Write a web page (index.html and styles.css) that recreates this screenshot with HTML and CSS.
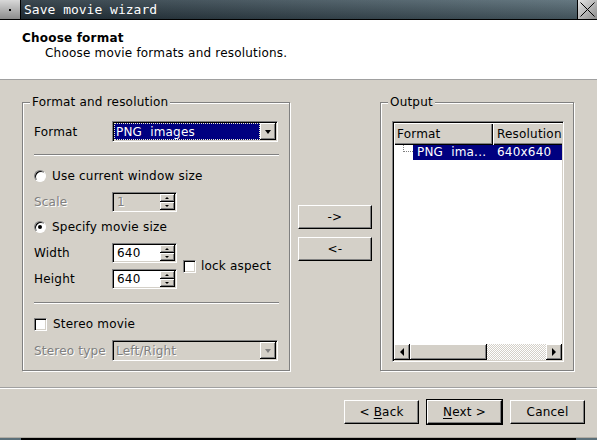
FILE: index.html
```html
<!DOCTYPE html>
<html>
<head>
<meta charset="utf-8">
<title>Save movie wizard</title>
<link rel="stylesheet" href="styles.css">
</head>
<body>
<div class="window">
  <div class="titlebar">
    <div class="tb-icon"><span class="tb-dot"></span></div>
    <div class="tb-title">Save movie wizard</div>
    <div class="tb-close">
      <svg width="19" height="19" viewBox="0 0 19 19"><path d="M2.5 2.5 L16.5 16.5 M16.5 2.5 L2.5 16.5" stroke="#000" stroke-width="1" fill="none"/></svg>
    </div>
  </div>

  <div class="header">
    <div class="h-title">Choose format</div>
    <div class="h-sub">Choose movie formats and resolutions.</div>
  </div>

  <div class="body">
    <div class="main">
      <div class="group group-left">
        <span class="legend">Format and resolution</span>

        <div class="row row-combo">
          <span class="lbl">Format</span>
          <div class="combo">
            <div class="combo-field sel"><span class="pre">PNG  images</span></div>
            <div class="combo-btn"><i class="tri-down"></i></div>
          </div>
        </div>

        <div class="sep sep-1"></div>

        <div class="row row-radio1">
          <span class="radio"></span><span class="opt-text">Use current window size</span>
        </div>

        <div class="row row-scale">
          <span class="lbl disabled">Scale</span>
          <div class="spin spin-disabled">
            <span class="spin-val disabled">1</span>
            <div class="spin-btns">
              <div class="sbtn"><i class="tri-up-s"></i></div>
              <div class="sbtn"><i class="tri-down-s"></i></div>
            </div>
          </div>
        </div>

        <div class="row row-radio2">
          <span class="radio checked"></span><span class="opt-text">Specify movie size</span>
        </div>

        <div class="size-block">
          <div class="size-col">
            <div class="row">
              <span class="lbl">Width</span>
              <div class="spin">
                <span class="spin-val">640</span>
                <div class="spin-btns">
                  <div class="sbtn"><i class="tri-up-s"></i></div>
                  <div class="sbtn"><i class="tri-down-s"></i></div>
                </div>
              </div>
            </div>
            <div class="row">
              <span class="lbl">Height</span>
              <div class="spin">
                <span class="spin-val">640</span>
                <div class="spin-btns">
                  <div class="sbtn"><i class="tri-up-s"></i></div>
                  <div class="sbtn"><i class="tri-down-s"></i></div>
                </div>
              </div>
            </div>
          </div>
          <span class="check"></span><span class="check-text">lock aspect</span>
        </div>

        <div class="sep sep-2"></div>

        <div class="row row-stereo">
          <span class="check"></span><span class="opt-text">Stereo movie</span>
        </div>

        <div class="row row-combo row-stype">
          <span class="lbl disabled">Stereo type</span>
          <div class="combo combo-disabled">
            <div class="combo-field"><span class="disabled">Left/Right</span></div>
            <div class="combo-btn"><i class="tri-down tri-disabled"></i></div>
          </div>
        </div>
      </div>

      <div class="mid">
        <button class="btn btn-mid">-&gt;</button>
        <button class="btn btn-mid">&lt;-</button>
      </div>

      <div class="group group-right">
        <span class="legend">Output</span>
        <div class="tree">
          <div class="tv-head">
            <div class="th th-1">Format</div>
            <div class="th th-2">Resolution</div>
          </div>
          <div class="tv-body">
            <div class="tv-row">
              <div class="tv-indent"><span class="branch"></span></div>
              <div class="tv-sel">
                <span class="tc1 pre">PNG  ima...</span>
                <span class="tc2">640x640</span>
              </div>
            </div>
          </div>
          <div class="hscroll">
            <div class="sb-btn"><i class="tri-left"></i></div>
            <div class="sb-thumb"></div>
            <div class="sb-trough"></div>
            <div class="sb-btn"><i class="tri-right"></i></div>
          </div>
        </div>
      </div>
    </div>

    <div class="hline"></div>

    <div class="buttons">
      <button class="btn">&lt; <u>B</u>ack</button>
      <button class="btn btn-default"><u>N</u>ext &gt;</button>
      <button class="btn">Cancel</button>
    </div>
  </div>

  <div class="bottom">
    <span class="corner"></span>
    <span class="corner"></span>
  </div>
</div>
</body>
</html>
```

FILE: styles.css
```css
* { box-sizing: border-box; }

html, body {
  margin: 0;
  padding: 0;
}

body {
  font-family: "DejaVu Sans", "Liberation Sans", sans-serif;
  font-size: 12px;
  letter-spacing: 0.2px;
  color: #000;
  background: #d4d0c8;
}

.window {
  width: 597px;
  height: 440px;
  display: flex;
  flex-direction: column;
  overflow: hidden;
}

.pre { white-space: pre; }

/* ---------- title bar ---------- */
.titlebar {
  height: 20px;
  flex: none;
  display: flex;
  border-bottom: 1px solid #000;
  background:
    linear-gradient(to bottom, rgba(255,255,255,0.10), rgba(0,0,0,0.22)),
    linear-gradient(to right, #23313a, #566b75);
}

.tb-icon {
  width: 21px;
  border-right: 1px solid #000;
  background: linear-gradient(to bottom, #d8d8d8, #8c8c8c);
  display: flex;
  align-items: center;
  justify-content: center;
}

.tb-dot {
  width: 2px;
  height: 2px;
  background: #000;
}

.tb-title {
  flex: 1;
  color: #fff;
  font-family: "DejaVu Sans Mono", "Liberation Mono", monospace;
  font-size: 13px;
  letter-spacing: 0;
  line-height: 19px;
  padding-left: 3px;
}

.tb-close {
  width: 20px;
  border-left: 1px solid #000;
  background: linear-gradient(135deg, #e6e6e6, #8a8a8a);
  display: flex;
}

/* ---------- header ---------- */
.header {
  height: 60px;
  flex: none;
  background: #fff;
  border-bottom: 1px solid #a0a0a0;
  padding: 11px 0 0 22px;
}

.h-title {
  font-weight: bold;
  line-height: 15px;
}

.h-sub {
  line-height: 15px;
  padding-left: 23px;
}

/* ---------- body ---------- */
.body {
  flex: 1;
  display: flex;
  flex-direction: column;
  padding-top: 22px;
}

.main {
  display: flex;
  gap: 8px;
  padding: 0 23px 0 22px;
  height: 269px;
  flex: none;
}

.group {
  position: relative;
  border: 1px solid #808080;
  box-shadow: inset 1px 1px 0 #fff, 1px 1px 0 #fff;
}

.legend {
  position: absolute;
  top: -8px;
  left: 7px;
  padding: 0 2px;
  line-height: 14px;
  background: #d4d0c8;
}

.group-left {
  width: 268px;
  padding: 18px 0 0 11px;
  display: flex;
  flex-direction: column;
}

.row {
  display: flex;
  align-items: center;
  height: 20px;
  flex: none;
}

.row-combo { height: 21px; }

.lbl {
  width: 78px;
  flex: none;
  white-space: nowrap;
}

.disabled {
  color: #808080;
  text-shadow: 1px 1px 0 #fff;
}

.sep {
  width: 245px;
  height: 2px;
  border-top: 1px solid #808080;
  border-bottom: 1px solid #fff;
  flex: none;
}

.sep-1 { margin-top: 12px; }
.row-radio1 { margin-top: 10px; }
.row-scale { margin-top: 6px; }
.row-radio2 { margin-top: 5px; }
.size-block { margin-top: 6px; }
.sep-2 { margin-top: 13px; }
.row-stereo { margin-top: 10px; }
.row-stype { margin-top: 6px; }

.opt-text { margin-left: 6px; }

/* radio */
.radio {
  width: 12px;
  height: 12px;
  flex: none;
  border-radius: 50%;
  background: #fff;
  border: 1px solid;
  border-color: #808080 #fff #fff #808080;
  box-shadow: inset 1px 1px 0 #000;
  display: flex;
  align-items: center;
  justify-content: center;
}

.radio.checked::after {
  content: "";
  width: 4px;
  height: 4px;
  border-radius: 50%;
  background: #000;
}

/* checkbox */
.check {
  width: 13px;
  height: 13px;
  flex: none;
  background: #fff;
  border: 1px solid;
  border-color: #808080 #fff #fff #808080;
  box-shadow: inset 1px 1px 0 #000, inset -1px -1px 0 #d4d0c8;
}

.check-text { margin-left: 5px; }

/* combo */
.combo {
  width: 166px;
  height: 21px;
  display: flex;
  padding: 1px;
  border: 1px solid;
  border-color: #808080 #fff #fff #808080;
  box-shadow: inset 1px 1px 0 #000, inset -1px -1px 0 #d4d0c8;
  background: #d4d0c8;
}

.combo-field {
  flex: 1;
  display: flex;
  align-items: center;
  padding-left: 2px;
}

.combo-field.sel {
  background: #000080;
  color: #fff;
  border: 1px dotted #f0f0c8;
  padding-left: 1px;
}

.combo-btn {
  width: 16px;
  flex: none;
  background: #d4d0c8;
  border-right: 1px solid #000;
  border-bottom: 1px solid #000;
  box-shadow: inset 1px 1px 0 #fff, inset -1px -1px 0 #808080;
  display: flex;
  align-items: center;
  justify-content: center;
}

.tri-down {
  width: 0;
  height: 0;
  border-left: 3.5px solid transparent;
  border-right: 3.5px solid transparent;
  border-top: 4px solid #000;
  margin-top: 1px;
}

.tri-down.tri-disabled { border-top-color: #808080; }

/* spin box */
.spin {
  width: 65px;
  height: 20px;
  flex: none;
  display: flex;
  padding: 1px;
  border: 1px solid;
  border-color: #808080 #fff #fff #808080;
  box-shadow: inset 1px 1px 0 #000, inset -1px -1px 0 #d4d0c8;
  background: #fff;
}

.spin-disabled { background: #d4d0c8; }

.spin-val {
  flex: 1;
  padding-left: 3px;
  line-height: 16px;
}

.spin-btns {
  width: 15px;
  flex: none;
  display: flex;
  flex-direction: column;
}

.sbtn {
  height: 8px;
  background: #d4d0c8;
  border-right: 1px solid #000;
  border-bottom: 1px solid #000;
  box-shadow: inset 1px 1px 0 #fff, inset -1px -1px 0 #808080;
  display: flex;
  align-items: center;
  justify-content: center;
}

.tri-up-s {
  width: 0;
  height: 0;
  border-left: 2px solid transparent;
  border-right: 2px solid transparent;
  border-bottom: 2px solid #000;
}

.tri-down-s {
  width: 0;
  height: 0;
  border-left: 2px solid transparent;
  border-right: 2px solid transparent;
  border-top: 2px solid #000;
}

.size-block {
  display: flex;
  align-items: center;
}

.size-col {
  display: flex;
  flex-direction: column;
  gap: 6px;
  margin-right: 6px;
}

/* ---------- middle buttons ---------- */
.mid {
  width: 74px;
  flex: none;
  display: flex;
  flex-direction: column;
  gap: 8px;
  padding-top: 103px;
}

.btn {
  font-family: "DejaVu Sans", "Liberation Sans", sans-serif;
  font-size: 12px;
  letter-spacing: 0.2px;
  color: #000;
  width: 75px;
  height: 24px;
  padding: 0;
  margin: 0;
  background: #d4d0c8;
  border: 1px solid;
  border-color: #fff #000 #000 #fff;
  box-shadow: inset -1px -1px 0 #808080;
  border-radius: 0;
}

.btn-mid { width: 74px; }

.btn u { text-decoration: underline; text-underline-offset: 2px; }

/* ---------- output group ---------- */
.group-right {
  width: 194px;
  padding: 18px 0 0 11px;
}

.tree {
  width: 172px;
  height: 241px;
  display: flex;
  flex-direction: column;
  padding: 1px;
  border: 1px solid;
  border-color: #808080 #fff #fff #808080;
  box-shadow: inset 1px 1px 0 #000, inset -1px -1px 0 #d4d0c8;
  background: #fff;
}

.tv-head {
  height: 22px;
  flex: none;
  display: flex;
  overflow: hidden;
}

.th {
  flex: none;
  height: 22px;
  line-height: 22px;
  padding-left: 3px;
  background: #d4d0c8;
  box-shadow: inset 1px 1px 0 #fff, inset -1px -1px 0 #000, inset -2px -2px 0 #808080;
  white-space: nowrap;
}

.th-1 { width: 99px; }
.th-2 { width: 100px; padding-left: 4px; }

.tv-body {
  flex: 1;
  overflow: hidden;
}

.tv-row {
  display: flex;
  height: 15px;
}

.tv-indent {
  width: 19px;
  flex: none;
}

.branch {
  display: block;
  margin-left: 9px;
  width: 10px;
  height: 7px;
  border-left: 1px dotted #808080;
  border-bottom: 1px dotted #808080;
}

.tv-sel {
  flex: 1;
  display: flex;
  background: #000080;
  color: #fff;
  line-height: 15px;
  white-space: nowrap;
  overflow: hidden;
}

.tc1 {
  width: 80px;
  flex: none;
  padding-left: 4px;
}

.tc2 { padding-left: 4px; }

/* scrollbar */
.hscroll {
  height: 16px;
  flex: none;
  display: flex;
}

.sb-btn,
.sb-thumb {
  background: #d4d0c8;
  border-right: 1px solid #000;
  border-bottom: 1px solid #000;
  box-shadow: inset 1px 1px 0 #fff, inset -1px -1px 0 #808080;
}

.sb-btn {
  width: 16px;
  flex: none;
  display: flex;
  align-items: center;
  justify-content: center;
}

.sb-thumb {
  width: 77px;
  flex: none;
}

.sb-trough {
  flex: 1;
  background: repeating-conic-gradient(#fff 0 25%, #d4d0c8 0 50%) 0 0 / 2px 2px;
}

.tri-left {
  width: 0;
  height: 0;
  border-top: 4px solid transparent;
  border-bottom: 4px solid transparent;
  border-right: 4px solid #000;
}

.tri-right {
  width: 0;
  height: 0;
  border-top: 4px solid transparent;
  border-bottom: 4px solid transparent;
  border-left: 4px solid #000;
}

/* ---------- bottom area ---------- */
.hline {
  margin-top: 16px;
  height: 2px;
  border-top: 1px solid #a0a0a0;
  border-bottom: 1px solid #fff;
  flex: none;
}

.buttons {
  margin-top: 11px;
  display: flex;
  justify-content: flex-end;
  gap: 8px;
  padding-right: 12px;
}

.btn-default {
  box-shadow: inset -1px -1px 0 #808080, 0 0 0 1px #000;
}

.bottom {
  height: 3px;
  flex: none;
  background: #000;
  border-top: 1px solid #b0aca4;
  display: flex;
  justify-content: space-between;
}

.corner {
  width: 21px;
  background: #5b6f79;
}
```
